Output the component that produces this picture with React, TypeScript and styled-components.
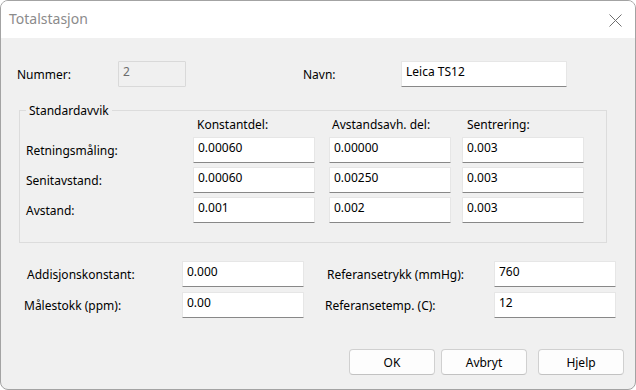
import React from 'react'
import styled, { createGlobalStyle } from 'styled-components'

interface IStyledComp {
  pl?: string
  ml?: string
  w?: string
}

const GlobalStyle = createGlobalStyle`
  html, body {
    margin: 0;
    padding: 0;
    background: #ffffff;
  }
  * {
    box-sizing: border-box;
  }
`

const Window = styled.div`
  width: 636px;
  height: 390px;
  border: 1px solid #a3a3a3;
  border-radius: 8px;
  overflow: hidden;
  background-color: #f0f0f0;
  font-family: 'Noto Sans', 'Open Sans', sans-serif;
  font-size: 12px;
  line-height: 15px;
  color: #000000;
  display: flex;
  flex-direction: column;
`
const TitleBar = styled.div`
  height: 37px;
  flex-shrink: 0;
  background-color: #ffffff;
  display: flex;
  align-items: center;
  justify-content: space-between;
  padding: 0 13px 0 8px;
`
const Title = styled.div`
  font-size: 14px;
  line-height: 18px;
  color: #8b8b8b;
  margin-top: -1px;
`
const CloseBtn = styled.div`
  width: 14px;
  height: 14px;
  display: flex;
  align-items: center;
  justify-content: center;
  margin-top: 1px;
`
const Body = styled.div`
  flex: 1;
  display: flex;
  flex-direction: column;
  padding: 23px 11px 0 16px;
`
const TopRow = styled.div`
  display: flex;
  align-items: center;
  height: 26px;
`
const Label = styled.div<IStyledComp>`
  width: ${props => props.w || 'auto'};
  margin-left: ${props => props.ml || '0'};
  padding-left: ${props => props.pl || '0'};
  white-space: nowrap;
  flex-shrink: 0;
`
const Field = styled.input<IStyledComp>`
  width: ${props => props.w || '122px'};
  height: 26px;
  margin: 0;
  padding: 2px 4px 7px 4px;
  border: 1px solid #e6e6e6;
  border-bottom-color: #888888;
  border-radius: 1px;
  background-color: #ffffff;
  font-family: inherit;
  font-size: 12px;
  line-height: 15px;
  color: #000000;
  outline: none;
`
const DisabledField = styled(Field)`
  background-color: #f0f0f0;
  border: 1px solid #d9d9d9;
  color: #6d6d6d;
`
const Group = styled.fieldset`
  width: 588px;
  margin: 16px 0 0 2px;
  padding: 0 0 19px 6px;
  border: 1px solid #dcdcdc;
  min-inline-size: 0;
`
const Legend = styled.legend`
  padding: 0 3px;
  line-height: 15px;
`
const DevGrid = styled.div`
  display: grid;
  grid-template-columns: 167px 136px 133px 122px;
  grid-template-rows: 16px repeat(3, 26px);
  row-gap: 4px;
  margin-top: -1px;
  align-items: center;
`
const ColHead = styled.div<IStyledComp>`
  padding-left: ${props => props.pl || '4px'};
  align-self: start;
  white-space: nowrap;
`
const BottomGrid = styled.div`
  display: grid;
  grid-template-columns: 158px 122px 21px 169px 122px;
  grid-template-rows: 26px 26px;
  row-gap: 5px;
  margin: 18px 0 0 7px;
  align-items: center;
`
const Footer = styled.div`
  display: flex;
  justify-content: flex-end;
  margin-top: 31px;
`
const Btn = styled.button<IStyledComp>`
  width: 86px;
  height: 26px;
  margin: 0 0 0 ${props => props.ml || '0'};
  padding: 0;
  border: 1px solid #d0d0d0;
  border-bottom-color: #c2c2c2;
  border-radius: 4px;
  background-color: #fdfdfd;
  font-family: inherit;
  font-size: 12px;
  line-height: 15px;
  color: #000000;
`

const rows = [
  { label: 'Retningsmåling:', values: ['0.00060', '0.00000', '0.003'] },
  { label: 'Senitavstand:', values: ['0.00060', '0.00250', '0.003'] },
  { label: 'Avstand:', values: ['0.001', '0.002', '0.003'] },
]

const TotalstasjonDialog = () => {
  return (
    <Window>
      <TitleBar>
        <Title>Totalstasjon</Title>
        <CloseBtn>
          <svg width="13" height="13" viewBox="0 0 13 13">
            <path d="M0.5 0.5 L12.5 12.5 M12.5 0.5 L0.5 12.5" stroke="#6f6f6f" strokeWidth="1" fill="none" />
          </svg>
        </CloseBtn>
      </TitleBar>
      <Body>
        <TopRow>
          <Label w="101px">Nummer:</Label>
          <DisabledField w="68px" defaultValue="2" disabled />
          <Label w="98px" ml="117px">Navn:</Label>
          <Field w="166px" defaultValue="Leica TS12" readOnly />
        </TopRow>

        <Group>
          <Legend>Standardavvik</Legend>
          <DevGrid>
            <div />
            <ColHead pl="4px">Konstantdel:</ColHead>
            <ColHead pl="3px">Avstandsavh. del:</ColHead>
            <ColHead pl="5px">Sentrering:</ColHead>
            {rows.map(row => (
              <React.Fragment key={row.label}>
                <Label>{row.label}</Label>
                {row.values.map((v, i) => (
                  <Field key={i} defaultValue={v} readOnly />
                ))}
              </React.Fragment>
            ))}
          </DevGrid>
        </Group>

        <BottomGrid>
          <Label pl="3px">Addisjonskonstant:</Label>
          <Field defaultValue="0.000" readOnly />
          <div />
          <Label pl="2px">Referansetrykk (mmHg):</Label>
          <Field defaultValue="760" readOnly />
          <Label>Målestokk (ppm):</Label>
          <Field defaultValue="0.00" readOnly />
          <div />
          <Label>Referansetemp. (C):</Label>
          <Field defaultValue="12" readOnly />
        </BottomGrid>

        <Footer>
          <Btn>OK</Btn>
          <Btn ml="6px">Avbryt</Btn>
          <Btn ml="11px">Hjelp</Btn>
        </Footer>
      </Body>
    </Window>
  )
}

const App = () => (
  <>
    <GlobalStyle />
    <TotalstasjonDialog />
  </>
)

export default App
